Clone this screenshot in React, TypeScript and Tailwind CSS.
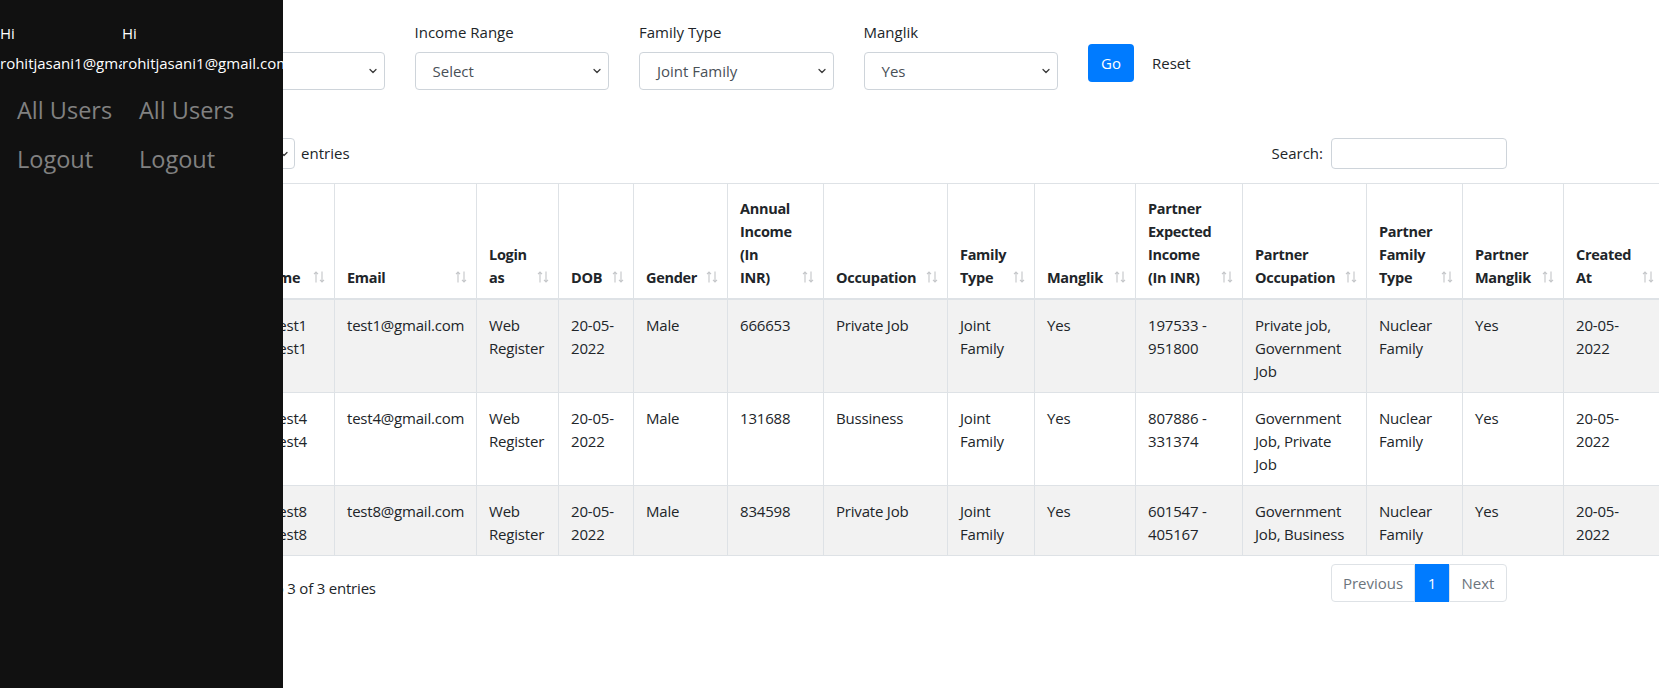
import { ChevronDown } from "lucide-react";

interface Column {
  label: string;
  width: string;
}

// "\n" marca el salto de línea del encabezado
const columns: Column[] = [
  { label: "#", width: "w-[50px]" },
  { label: "Name", width: "w-[89px]" },
  { label: "Email", width: "w-[142px]" },
  { label: "Login as", width: "w-[82px]" },
  { label: "DOB", width: "w-[75px]" },
  { label: "Gender", width: "w-[94px]" },
  { label: "Annual Income (In\nINR)", width: "w-[96px]" },
  { label: "Occupation", width: "w-[124px]" },
  { label: "Family Type", width: "w-[87px]" },
  { label: "Manglik", width: "w-[101px]" },
  { label: "Partner Expected Income (In INR)", width: "w-[107px]" },
  { label: "Partner Occupation", width: "w-[124px]" },
  { label: "Partner Family Type", width: "w-[96px]" },
  { label: "Partner Manglik", width: "w-[101px]" },
  { label: "Created At", width: "w-[100px]" }
];

const users = [
  ["1", "test1 test1", "test1@gmail.com", "Web Register", "20-05-2022", "Male", "666653", "Private Job", "Joint Family", "Yes", "197533 - 951800", "Private job, Government Job", "Nuclear Family", "Yes", "20-05-2022"],
  ["2", "test4 test4", "test4@gmail.com", "Web Register", "20-05-2022", "Male", "131688", "Bussiness", "Joint Family", "Yes", "807886 - 331374", "Government Job, Private Job", "Nuclear Family", "Yes", "20-05-2022"],
  ["3", "test8 test8", "test8@gmail.com", "Web Register", "20-05-2022", "Male", "834598", "Private Job", "Joint Family", "Yes", "601547 - 405167", "Government Job, Business", "Nuclear Family", "Yes", "20-05-2022"]
];

const filters = [
  { label: "Gender", value: "Select" },
  { label: "Income Range", value: "Select" },
  { label: "Family Type", value: "Joint Family" },
  { label: "Manglik", value: "Yes" }
];

const SideNav = ({ clip }: { clip?: boolean }) => (
  <div className={clip ? "w-[122px] shrink-0 overflow-hidden pt-[18px]" : "flex-1 pt-[18px]"}>
    <div className="text-white text-[15px] leading-[30px] whitespace-nowrap">
      <div>Hi</div>
      <div>rohitjasani1@gmail.com</div>
    </div>
    <nav className="mt-2 flex flex-col">
      <a className="py-2 pl-[17px] text-[23.5px] leading-[33px] text-[#818181] whitespace-nowrap">All Users</a>
      <a className="py-2 pl-[17px] text-[23.5px] leading-[33px] text-[#818181] whitespace-nowrap">Logout</a>
    </nav>
  </div>
);

const Dropdown = ({ value, className }: { value: string; className: string }) => (
  <div className={`flex items-center justify-between border border-[#ced4da] rounded-[4px] bg-white text-[#495057] ${className}`}>
    <span>{value}</span>
    <ChevronDown size={12} strokeWidth={2.5} className="text-[#3a3a3a]" />
  </div>
);

const SortIcon = () => (
  <svg
    width="12"
    height="12"
    viewBox="0 0 12 12"
    fill="none"
    stroke="#c3c5c8"
    strokeWidth="1.1"
    className="absolute right-[9px] bottom-[15px]"
  >
    <path d="M3 11.5V1M1 3.2L3 1l2 2.2" />
    <path d="M9 0.5V11M7 8.8L9 11l2-2.2" />
  </svg>
);

export default function App() {
  return (
    <div className="relative h-[688px] w-full overflow-hidden bg-white text-[15px] text-[#212529] font-['Open_Sans',sans-serif]">
      {/* Sidebar */}
      <aside className="absolute left-0 top-0 z-10 flex h-full w-[283px] overflow-hidden bg-[#111]">
        <SideNav clip />
        <SideNav />
      </aside>

      <main className="pt-5">
        {/* Filtros */}
        <div className="flex items-start gap-[30px] pl-[190px]">
          {filters.map(f => (
            <div key={f.label} className="w-[194.5px]">
              <label className="mb-2 block leading-6">{f.label}</label>
              <Dropdown value={f.value} className="h-[38px] pl-[17px] pr-[5px]" />
            </div>
          ))}
          <div className="mt-6 flex items-center gap-[6px]">
            <button className="h-[38px] w-[46px] rounded-[4px] bg-[#007bff] text-white">Go</button>
            <button className="h-[38px] px-3 text-[#212529]">Reset</button>
          </div>
        </div>

        {/* Tabla */}
        <div className="ml-[195px] mt-12 w-[1312px]">
          <div className="flex h-[31px] items-center justify-between">
            <label className="flex items-center gap-[6px]">
              Show
              <Dropdown value="10" className="h-[31px] w-[56px] pl-2 pr-[4px] text-[14px]" />
              entries
            </label>
            <label className="flex items-center gap-2">
              Search:
              <input type="text" className="h-[31px] w-[176px] rounded-[4px] border border-[#ced4da] px-2 outline-none" />
            </label>
          </div>

          <table className="mt-[14px] w-[1468px] table-fixed border-collapse">
            <colgroup>
              {columns.map(c => (
                <col key={c.label} className={c.width} />
              ))}
            </colgroup>
            <thead>
              <tr>
                {columns.map(c => (
                  <th
                    key={c.label}
                    className="relative whitespace-pre-line border border-b-2 border-[#dee2e6] pt-[13px] pb-[9px] pl-3 pr-[30px] text-left align-bottom text-[14.5px] font-bold leading-[23px] tracking-[-0.3px]"
                  >
                    {c.label}
                    <SortIcon />
                  </th>
                ))}
              </tr>
            </thead>
            <tbody>
              {users.map((row, i) => (
                <tr key={row[0]} className={i % 2 === 0 ? "bg-[#f2f2f2]" : "bg-white"}>
                  {row.map((cell, j) => (
                    <td
                      key={j}
                      className={`border border-[#dee2e6] px-3 pt-[14px] pb-[9px] align-top leading-[23px] tracking-[-0.2px] ${j === 1 ? "text-center" : ""}`}
                    >
                      {cell}
                    </td>
                  ))}
                </tr>
              ))}
            </tbody>
          </table>

          <div className="mt-2 flex items-start justify-between">
            <div className="pl-px pt-3 leading-6 tracking-[-0.2px]">Showing 1 to 3 of 3 entries</div>
            <div className="flex h-[38px]">
              <span className="flex w-[84px] items-center justify-center rounded-l-[4px] border border-[#dee2e6] text-[#6c757d]">Previous</span>
              <span className="flex w-[34px] items-center justify-center border border-[#007bff] bg-[#007bff] text-white">1</span>
              <span className="flex w-[58px] items-center justify-center rounded-r-[4px] border border-[#dee2e6] text-[#6c757d]">Next</span>
            </div>
          </div>
        </div>
      </main>
    </div>
  );
}
